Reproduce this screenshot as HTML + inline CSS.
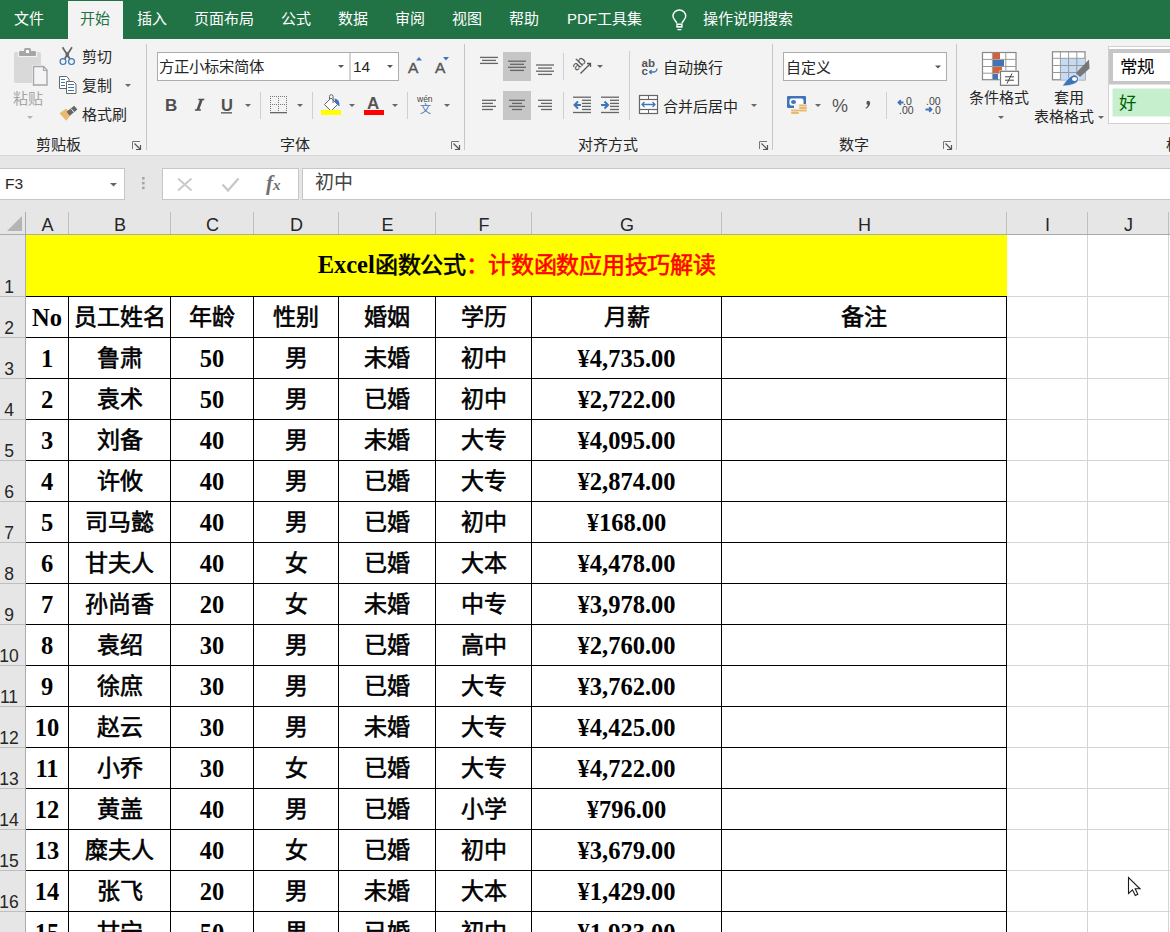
<!DOCTYPE html><html lang="zh-CN"><head><meta charset="utf-8"><title>Excel</title><style>
html,body{margin:0;padding:0}
body{width:1170px;height:932px;overflow:hidden;position:relative;background:#fff;font-family:"Liberation Sans",sans-serif}
div{box-sizing:border-box}
.ui{font-family:"Liberation Sans",sans-serif;font-size:15.5px;color:#262626;line-height:1}
.cell{position:absolute;display:flex;align-items:center;justify-content:center;font-family:"Liberation Serif",serif;font-weight:bold;font-size:23px;color:#000;white-space:nowrap;line-height:1}
.tab{position:absolute;top:-1px;height:39px;line-height:39px;color:#fff;font-size:15px;white-space:nowrap}
.arr{position:absolute;width:0;height:0;border-left:3px solid transparent;border-right:3px solid transparent;border-top:3px solid #666}
</style></head><body>

<div style="position:absolute;left:0px;top:0px;width:1170px;height:39px;background:#217346"></div>
<div style="position:absolute;left:68px;top:1px;width:55px;height:38px;background:#f3f3f3"></div>
<div class="tab" style="left:14px;color:#fff">文件</div>
<div class="tab" style="left:80px;color:#217346">开始</div>
<div class="tab" style="left:137px;color:#fff">插入</div>
<div class="tab" style="left:194px;color:#fff">页面布局</div>
<div class="tab" style="left:281px;color:#fff">公式</div>
<div class="tab" style="left:338px;color:#fff">数据</div>
<div class="tab" style="left:395px;color:#fff">审阅</div>
<div class="tab" style="left:452px;color:#fff">视图</div>
<div class="tab" style="left:509px;color:#fff">帮助</div>
<div class="tab" style="left:567px;color:#fff">PDF工具集</div>
<div class="tab" style="left:703px;color:#fff">操作说明搜索</div>
<svg width="700" height="39" style="position:absolute;left:0;top:0"><path d="M676.8 23.3C676.5 21 673 19.5 673 16.3A6.3 6.3 0 0 1 685.7 16.3C685.7 19.5 682.3 21 682 23.3" fill="none" stroke="#fff" stroke-width="1.4"/><rect x="676.3" y="23.5" width="6.3" height="4.2" fill="#fff"/><rect x="677.8" y="25" width="3.3" height="1" fill="#217346"/><rect x="677.3" y="29" width="4.3" height="1.2" rx="0.6" fill="#fff"/></svg>
<div style="position:absolute;left:0px;top:39px;width:1170px;height:117px;background:#f3f3f3"></div>
<div style="position:absolute;left:0px;top:155px;width:1170px;height:1px;background:#d6d6d6"></div>
<svg width="1170" height="160" style="position:absolute;left:0;top:0"><rect x="146" y="44" width="1" height="106" fill="#c6c6c6"/><rect x="464" y="44" width="1" height="106" fill="#c6c6c6"/><rect x="772" y="44" width="1" height="106" fill="#c6c6c6"/><rect x="956" y="44" width="1" height="106" fill="#c6c6c6"/><rect x="14" y="52" width="27" height="31" rx="1.5" fill="#d9d9d9"/><rect x="18" y="50" width="19" height="7" fill="#f3f3f3"/><rect x="19" y="51" width="17" height="5" rx="1" fill="#a6a6a6"/><rect x="24" y="48" width="7" height="5" rx="1.5" fill="#a6a6a6"/><rect x="26" y="50" width="3" height="3" fill="#fff"/><path d="M32 65h13l4 4v18h-17z" fill="#f3f3f3"/><path d="M33.5 66.5h10l3.5 3.5v15h-13.5z" fill="#f4f3f6" stroke="#a6a6a6" stroke-width="1.4"/><path d="M43.5 66.5v4h3.5" fill="none" stroke="#a6a6a6" stroke-width="1.2"/><path d="M27 116h6l-3 3z" fill="#b4b4b4"/><path d="M62.5 47.3L69.8 58.8M72 47.3L64.7 58.8" stroke="#666" stroke-width="1.7" fill="none"/><path d="M67.25 51.8L69.2 54.8L67.25 57.8L65.3 54.8z" fill="#666"/><circle cx="63" cy="61.6" r="2.9" fill="none" stroke="#3f75b8" stroke-width="1.2"/><circle cx="71.5" cy="61.6" r="2.9" fill="none" stroke="#3f75b8" stroke-width="1.2"/><path d="M59.5 76.5h7l2.5 2.5v9.5h-9.5z" fill="#fff" stroke="#666" stroke-width="1"/><path d="M66.5 81.5h7l2.5 2.5v9.5h-9.5z" fill="#fff" stroke="#666" stroke-width="1"/><rect x="61" y="79.0" width="4" height="1" fill="#3f75b8"/><rect x="61" y="82.0" width="4" height="1" fill="#3f75b8"/><rect x="61" y="85.0" width="4" height="1" fill="#3f75b8"/><rect x="68" y="84.0" width="6" height="1" fill="#3f75b8"/><rect x="68" y="87.0" width="6" height="1" fill="#3f75b8"/><rect x="68" y="90.0" width="6" height="1" fill="#3f75b8"/><path d="M125 84h6l-3 3z" fill="#666"/><path d="M59.5 113.2L66.3 108.6L71.2 114.6L66.2 120.8z" fill="#e8b96f"/><path d="M68.2 113.8L75.8 107.6" stroke="#666" stroke-width="5"/><path d="M71.2 108.8L74 112.3" stroke="#f3f3f3" stroke-width="1"/><path d="M132.5 149V141.5H140" fill="none" stroke="#777" stroke-width="1"/><path d="M134.5 143.5L140.5 149.5M140.5 145V149.5H136" fill="none" stroke="#555" stroke-width="1.2"/><rect x="157.5" y="52.5" width="241" height="28" fill="#fff" stroke="#acacac" stroke-width="1"/><rect x="349.5" y="52.5" width="1" height="28" fill="#acacac"/><path d="M338 65h6l-3 3z" fill="#555"/><path d="M387 65h6l-3 3z" fill="#555"/><path d="M416 60.5l3-3.5l3 3.5z" fill="#3f75b8"/><path d="M443 57h6l-3 3.5z" fill="#3f75b8"/><path d="M245 104h6l-3 3z" fill="#666"/><rect x="221" y="112.2" width="11" height="1.3" fill="#505050"/><path d="M198.5 98.8H204.5L204.2 100.3H202.6L199.4 109.2H201L200.7 110.7H194.7L195 109.2H196.6L199.8 100.3H198.2z" fill="#505050"/><rect x="260" y="92" width="1" height="27" fill="#cfcfcf"/><rect x="270" y="96" width="1" height="1" fill="#777"/><rect x="270" y="104" width="1" height="1" fill="#777"/><rect x="272" y="96" width="1" height="1" fill="#777"/><rect x="272" y="104" width="1" height="1" fill="#777"/><rect x="274" y="96" width="1" height="1" fill="#777"/><rect x="274" y="104" width="1" height="1" fill="#777"/><rect x="276" y="96" width="1" height="1" fill="#777"/><rect x="276" y="104" width="1" height="1" fill="#777"/><rect x="278" y="96" width="1" height="1" fill="#777"/><rect x="278" y="104" width="1" height="1" fill="#777"/><rect x="280" y="96" width="1" height="1" fill="#777"/><rect x="280" y="104" width="1" height="1" fill="#777"/><rect x="282" y="96" width="1" height="1" fill="#777"/><rect x="282" y="104" width="1" height="1" fill="#777"/><rect x="284" y="96" width="1" height="1" fill="#777"/><rect x="284" y="104" width="1" height="1" fill="#777"/><rect x="286" y="96" width="1" height="1" fill="#777"/><rect x="286" y="104" width="1" height="1" fill="#777"/><rect x="270" y="96" width="1" height="1" fill="#777"/><rect x="278" y="96" width="1" height="1" fill="#777"/><rect x="286" y="96" width="1" height="1" fill="#777"/><rect x="270" y="98" width="1" height="1" fill="#777"/><rect x="278" y="98" width="1" height="1" fill="#777"/><rect x="286" y="98" width="1" height="1" fill="#777"/><rect x="270" y="100" width="1" height="1" fill="#777"/><rect x="278" y="100" width="1" height="1" fill="#777"/><rect x="286" y="100" width="1" height="1" fill="#777"/><rect x="270" y="102" width="1" height="1" fill="#777"/><rect x="278" y="102" width="1" height="1" fill="#777"/><rect x="286" y="102" width="1" height="1" fill="#777"/><rect x="270" y="104" width="1" height="1" fill="#777"/><rect x="278" y="104" width="1" height="1" fill="#777"/><rect x="286" y="104" width="1" height="1" fill="#777"/><rect x="270" y="106" width="1" height="1" fill="#777"/><rect x="278" y="106" width="1" height="1" fill="#777"/><rect x="286" y="106" width="1" height="1" fill="#777"/><rect x="270" y="108" width="1" height="1" fill="#777"/><rect x="278" y="108" width="1" height="1" fill="#777"/><rect x="286" y="108" width="1" height="1" fill="#777"/><rect x="270" y="110" width="1" height="1" fill="#777"/><rect x="278" y="110" width="1" height="1" fill="#777"/><rect x="286" y="110" width="1" height="1" fill="#777"/><rect x="270" y="112" width="17" height="1.3" fill="#666"/><path d="M297 104h6l-3 3z" fill="#666"/><rect x="312" y="92" width="1" height="27" fill="#cfcfcf"/><path d="M324.5 104.5L331 98L337.5 104.5L331 111z" fill="#fff" stroke="#666" stroke-width="1"/><path d="M329.5 100V96.5a1.8 1.8 0 0 1 3.6 0V103" fill="none" stroke="#666" stroke-width="1"/><path d="M334.5 98.5q5.5 0.5 5 8l-2-1.5l-2.5-3z" fill="#3f75b8"/><rect x="321" y="110" width="20" height="5" fill="#ff0"/><path d="M349 104h6l-3 3z" fill="#666"/><rect x="364" y="110" width="20" height="5" fill="#f00"/><path d="M392 104h6l-3 3z" fill="#666"/><rect x="407" y="92" width="1" height="27" fill="#cfcfcf"/><path d="M444 104h6l-3 3z" fill="#666"/><path d="M451.5 149V141.5H459" fill="none" stroke="#777" stroke-width="1"/><path d="M453.5 143.5L459.5 149.5M459.5 145V149.5H455" fill="none" stroke="#555" stroke-width="1.2"/><rect x="480" y="56.75" width="18" height="1.3" fill="#666"/><rect x="482" y="59.75" width="14" height="1.3" fill="#666"/><rect x="480" y="62.75" width="18" height="1.3" fill="#666"/><rect x="503" y="52" width="28" height="29" fill="#c6c6c6"/><rect x="508" y="60.550000000000004" width="18" height="1.3" fill="#666"/><rect x="510" y="63.65" width="14" height="1.3" fill="#666"/><rect x="508" y="66.64999999999999" width="18" height="1.3" fill="#666"/><rect x="510" y="69.75" width="14" height="1.3" fill="#666"/><rect x="536" y="64.35" width="18" height="1.3" fill="#666"/><rect x="538" y="67.44999999999999" width="14" height="1.3" fill="#666"/><rect x="536" y="70.55" width="18" height="1.3" fill="#666"/><rect x="538" y="73.75" width="14" height="1.3" fill="#666"/><rect x="563" y="53" width="1" height="27" fill="#cfcfcf"/><text x="0" y="0" transform="translate(576.5 71.5) rotate(-45)" font-family="Liberation Sans" font-size="13" fill="#555">ab</text><path d="M580.5 73.5L590.3 63.7M587 63.5h3.5v3.5" fill="none" stroke="#555" stroke-width="1.3"/><path d="M597 65h6l-3 3z" fill="#666"/><rect x="629" y="51" width="1" height="69" fill="#cfcfcf"/><rect x="482" y="99.64999999999999" width="14" height="1.3" fill="#666"/><rect x="482" y="102.75" width="11" height="1.3" fill="#666"/><rect x="482" y="105.75" width="14" height="1.3" fill="#666"/><rect x="482" y="108.85" width="11" height="1.3" fill="#666"/><rect x="503" y="91" width="28" height="29" fill="#c6c6c6"/><rect x="509" y="99.64999999999999" width="16" height="1.3" fill="#666"/><rect x="512" y="102.75" width="10" height="1.3" fill="#666"/><rect x="509" y="105.75" width="16" height="1.3" fill="#666"/><rect x="512" y="108.85" width="10" height="1.3" fill="#666"/><rect x="538" y="99.64999999999999" width="14" height="1.3" fill="#666"/><rect x="541" y="102.75" width="11" height="1.3" fill="#666"/><rect x="538" y="105.75" width="14" height="1.3" fill="#666"/><rect x="541" y="108.85" width="11" height="1.3" fill="#666"/><rect x="563" y="92" width="1" height="27" fill="#cfcfcf"/><rect x="573" y="96.55" width="18" height="1.3" fill="#666"/><rect x="573" y="111.85" width="18" height="1.3" fill="#666"/><rect x="582" y="99.64999999999999" width="9" height="1.3" fill="#666"/><rect x="582" y="102.75" width="9" height="1.3" fill="#666"/><rect x="582" y="105.75" width="9" height="1.3" fill="#666"/><rect x="582" y="108.85" width="9" height="1.3" fill="#666"/><path d="M581 105H575M578 101.5L574.5 105L578 108.5" fill="none" stroke="#3f75b8" stroke-width="2"/><rect x="601" y="96.55" width="18" height="1.3" fill="#666"/><rect x="601" y="111.85" width="18" height="1.3" fill="#666"/><rect x="610" y="99.64999999999999" width="9" height="1.3" fill="#666"/><rect x="610" y="102.75" width="9" height="1.3" fill="#666"/><rect x="610" y="105.75" width="9" height="1.3" fill="#666"/><rect x="610" y="108.85" width="9" height="1.3" fill="#666"/><path d="M601 105H607.5M604.5 101.5L608 105L604.5 108.5" fill="none" stroke="#3f75b8" stroke-width="2"/><text x="641.5" y="66.5" font-family="Liberation Sans" font-size="11.5" font-weight="bold" fill="#555">ab</text><text x="641.5" y="74.5" font-family="Liberation Sans" font-size="11.5" font-weight="bold" fill="#555">c</text><path d="M657 68.5q0 3.5-4 3.5h-3.5M651.5 70l-2 2l2 2" fill="none" stroke="#3f75b8" stroke-width="1.3"/><rect x="639.5" y="95.5" width="18" height="18" fill="#fff" stroke="#666" stroke-width="1.2"/><rect x="639.5" y="98.9" width="18.0" height="1.2" fill="#666"/><rect x="639.5" y="108.9" width="18.0" height="1.2" fill="#666"/><rect x="648" y="95.5" width="1" height="4" fill="#666"/><rect x="648" y="109.5" width="1" height="4" fill="#666"/><path d="M642 104.5h13M644.5 102l-2.5 2.5l2.5 2.5M652.5 102l2.5 2.5l-2.5 2.5" fill="none" stroke="#3f75b8" stroke-width="1.3"/><path d="M751 104h6l-3 3z" fill="#666"/><path d="M759.5 149V141.5H767" fill="none" stroke="#777" stroke-width="1"/><path d="M761.5 143.5L767.5 149.5M767.5 145V149.5H763" fill="none" stroke="#555" stroke-width="1.2"/><rect x="783.5" y="52.5" width="163" height="28" fill="#fff" stroke="#acacac" stroke-width="1"/><path d="M935 65.5h6l-3 3z" fill="#555"/><rect x="787" y="96" width="19" height="12" rx="1" fill="#3f75b8"/><rect x="789.5" y="98.5" width="14" height="7" rx="2" fill="#fff"/><ellipse cx="793.5" cy="102" rx="2.5" ry="2" fill="#3f75b8"/><rect x="794" y="104" width="13" height="8" fill="#f3f3f3"/><rect x="799" y="104.5" width="8" height="2" rx="1" fill="#e8b96f"/><rect x="799" y="107" width="8" height="2" rx="1" fill="#e8b96f"/><rect x="799" y="109.5" width="8" height="2" rx="1" fill="#e8b96f"/><rect x="791" y="109.5" width="8" height="2" rx="1" fill="#e8b96f"/><rect x="791" y="112" width="8" height="2" rx="1" fill="#e8b96f"/><path d="M815 104h6l-3 3z" fill="#666"/><rect x="886" y="92" width="1" height="27" fill="#cfcfcf"/><path d="M903.5 102.5H898.5M900.8 100.2L898.5 102.5L900.8 104.8" fill="none" stroke="#3f75b8" stroke-width="1.8"/><path d="M925.5 109.5H931.5M929.2 107.2L931.5 109.5L929.2 111.8" fill="none" stroke="#3f75b8" stroke-width="1.8"/><path d="M943.5 149V141.5H951" fill="none" stroke="#777" stroke-width="1"/><path d="M945.5 143.5L951.5 149.5M951.5 145V149.5H947" fill="none" stroke="#555" stroke-width="1.2"/><rect x="982.5" y="52.5" width="33.5" height="27.2" fill="#fff" stroke="#888" stroke-width="1.2"/><rect x="982.5" y="58.9" width="33.5" height="1" fill="#999"/><rect x="982.5" y="66.0" width="33.5" height="1" fill="#999"/><rect x="982.5" y="72.7" width="33.5" height="1" fill="#999"/><rect x="991.9" y="52.5" width="1" height="27.2" fill="#999"/><rect x="1005.3" y="52.5" width="1" height="27.2" fill="#999"/><rect x="993" y="53" width="7" height="6" fill="#d4613b"/><rect x="993" y="60" width="11" height="6" fill="#3f75b8"/><rect x="993" y="67" width="9" height="6" fill="#d4613b"/><rect x="993" y="74" width="5" height="5.5" fill="#3f75b8"/><rect x="999.5" y="70.3" width="20" height="16" fill="#f3f3f3"/><rect x="1000.5" y="71.3" width="18" height="14" fill="#fff" stroke="#777" stroke-width="1.2"/><path d="M1005 76.8h9M1005 80.2h9M1007 83.5L1012 73.5" fill="none" stroke="#444" stroke-width="1"/><path d="M998 116h6l-3 3z" fill="#666"/><rect x="1052.5" y="51.8" width="32.5" height="28" fill="#fff" stroke="#888" stroke-width="1.2"/><rect x="1061" y="58.8" width="24" height="21" fill="#c5daf3"/><rect x="1052.5" y="57.8" width="32.5" height="1" fill="#999"/><rect x="1052.5" y="65.0" width="32.5" height="1" fill="#999"/><rect x="1052.5" y="72.0" width="32.5" height="1" fill="#999"/><rect x="1059.9" y="51.8" width="1" height="28" fill="#999"/><rect x="1068.1" y="51.8" width="1" height="28" fill="#999"/><rect x="1076.3" y="51.8" width="1" height="28" fill="#999"/><path d="M1089 59.5L1089.5 68.5L1080 77L1076 73z" fill="#777"/><path d="M1075 74.5L1079 78.5" stroke="#f3f3f3" stroke-width="1.5"/><path d="M1073 75C1076 74 1079 77 1078.5 80C1077 84 1070 86 1062 86C1065 83 1067 78 1073 75z" fill="#3f75b8" stroke="#f3f3f3" stroke-width="0.8"/><ellipse cx="1074.5" cy="79" rx="2.5" ry="2" fill="#fff"/><path d="M1098 116h6l-3 3z" fill="#666"/><rect x="1108.5" y="46.5" width="70" height="77" fill="#fff" stroke="#d0d0d0" stroke-width="1"/><rect x="1109" y="49" width="70" height="35.5" fill="#c6c6c6"/><rect x="1113" y="53" width="70" height="28" fill="#fff"/><rect x="1112.5" y="88.5" width="70" height="28" fill="#c6efce"/><path d="M867.8 100.8a2.3 2.3 0 0 1 2.3 2.5c0 2.2-1.6 4.3-4.2 5.4l-0.5-0.8c1.5-0.9 2.3-1.9 2.4-2.9a2.3 2.3 0 0 1 0-4.2z" fill="#555"/></svg>
<div style="position:absolute;left:13px;top:91px;white-space:nowrap;font-size:15px;line-height:15px;color:#a6a6a6;">粘贴</div>
<div style="position:absolute;left:82px;top:49px;white-space:nowrap;font-size:15px;line-height:15px;color:#262626;">剪切</div>
<div style="position:absolute;left:82px;top:78px;white-space:nowrap;font-size:15px;line-height:15px;color:#262626;">复制</div>
<div style="position:absolute;left:82px;top:107px;white-space:nowrap;font-size:15px;line-height:15px;color:#262626;">格式刷</div>
<div style="position:absolute;left:36px;top:137px;white-space:nowrap;font-size:15px;line-height:15px;color:#262626;">剪贴板</div>
<div style="position:absolute;left:159px;top:59px;white-space:nowrap;font-size:15.3px;line-height:15.3px;color:#262626;">方正小标宋简体</div>
<div style="position:absolute;left:353px;top:59px;white-space:nowrap;font-size:15.5px;line-height:15.5px;color:#262626;">14</div>
<div style="position:absolute;left:165px;top:97px;white-space:nowrap;font-size:17px;line-height:17px;color:#505050;font-weight:bold">B</div>
<div style="position:absolute;left:221px;top:97px;white-space:nowrap;font-size:16.5px;line-height:16.5px;color:#505050;font-weight:bold">U</div>
<div style="position:absolute;left:417px;top:95px;white-space:nowrap;font-size:8.5px;line-height:8.5px;color:#444;">wén</div>
<div style="position:absolute;left:408px;top:59.5px;white-space:nowrap;font-size:15.5px;line-height:15.5px;color:#555;-webkit-text-stroke:0.4px #555">A</div>
<div style="position:absolute;left:435px;top:59.5px;white-space:nowrap;font-size:15.5px;line-height:15.5px;color:#555;-webkit-text-stroke:0.4px #555">A</div>
<div style="position:absolute;left:367px;top:95px;white-space:nowrap;font-size:17px;line-height:17px;color:#555;font-weight:bold">A</div>
<div style="position:absolute;left:420px;top:104px;white-space:nowrap;font-size:11px;line-height:11px;color:#3f75b8;">文</div>
<div style="position:absolute;left:280px;top:137px;white-space:nowrap;font-size:15px;line-height:15px;color:#262626;">字体</div>
<div style="position:absolute;left:663px;top:60px;white-space:nowrap;font-size:15px;line-height:15px;color:#262626;">自动换行</div>
<div style="position:absolute;left:663px;top:99px;white-space:nowrap;font-size:15px;line-height:15px;color:#262626;">合并后居中</div>
<div style="position:absolute;left:577.5px;top:137px;white-space:nowrap;font-size:15px;line-height:15px;color:#262626;">对齐方式</div>
<div style="position:absolute;left:786px;top:60px;white-space:nowrap;font-size:15px;line-height:15px;color:#262626;">自定义</div>
<div style="position:absolute;left:832px;top:97px;white-space:nowrap;font-size:18px;line-height:18px;color:#555;">%</div>
<div style="position:absolute;left:903px;top:96px;white-space:nowrap;font-size:10.5px;line-height:10.5px;color:#444;">.0</div>
<div style="position:absolute;left:899px;top:105px;white-space:nowrap;font-size:10.5px;line-height:10.5px;color:#444;">.00</div>
<div style="position:absolute;left:926px;top:96px;white-space:nowrap;font-size:10.5px;line-height:10.5px;color:#444;">.00</div>
<div style="position:absolute;left:932px;top:105px;white-space:nowrap;font-size:10.5px;line-height:10.5px;color:#444;">.0</div>
<div style="position:absolute;left:838.5px;top:137px;white-space:nowrap;font-size:15px;line-height:15px;color:#262626;">数字</div>
<div style="position:absolute;left:968.5px;top:90px;white-space:nowrap;font-size:15px;line-height:15px;color:#262626;">条件格式</div>
<div style="position:absolute;left:1054px;top:90px;white-space:nowrap;font-size:15px;line-height:15px;color:#262626;">套用</div>
<div style="position:absolute;left:1033.5px;top:109px;white-space:nowrap;font-size:15px;line-height:15px;color:#262626;">表格格式</div>
<div style="position:absolute;left:1120px;top:59px;white-space:nowrap;font-size:17.5px;line-height:17.5px;color:#000;">常规</div>
<div style="position:absolute;left:1118.5px;top:95px;white-space:nowrap;font-size:17.5px;line-height:17.5px;color:#006100;">好</div>
<div style="position:absolute;left:1166px;top:137px;white-space:nowrap;font-size:15px;line-height:15px;color:#262626;">格</div>
<div style="position:absolute;left:0px;top:156px;width:1170px;height:44px;background:#e6e6e6"></div>
<div style="position:absolute;left:-1px;top:168px;width:126px;height:32px;background:#fff;border:1px solid #c6c6c6"></div>
<div style="position:absolute;left:5px;top:176px;white-space:nowrap;font-size:15.5px;line-height:16px;color:#262626">F3</div>
<div style="position:absolute;left:162px;top:168px;width:137px;height:32px;background:#fff;border:1px solid #c6c6c6"></div>
<div style="position:absolute;left:302px;top:168px;width:900px;height:32px;background:#fff;border:1px solid #c6c6c6"></div>
<div style="position:absolute;left:315px;top:173px;white-space:nowrap;font-size:19px;line-height:19px;color:#444">初中</div>
<svg width="1170" height="240" style="position:absolute;left:0;top:0"><path d="M110 183h7l-3.5 3.5z" fill="#666"/><rect x="142" y="177" width="2.6" height="2.6" fill="#a6a6a6"/><rect x="142" y="181.8" width="2.6" height="2.6" fill="#a6a6a6"/><rect x="142" y="186.6" width="2.6" height="2.6" fill="#a6a6a6"/><path d="M178 178.5L191.5 190.5M191.5 178.5L178 190.5" stroke="#c8c8c8" stroke-width="1.8" fill="none"/><path d="M222.5 184.5L228 190.5L238.5 178.5" stroke="#c8c8c8" stroke-width="2.4" fill="none"/></svg>
<div style="position:absolute;left:266px;top:173px;white-space:nowrap;font-family:'Liberation Serif',serif;font-style:italic;font-weight:bold;font-size:21px;line-height:21px;color:#707070">f</div>
<div style="position:absolute;left:273px;top:178px;white-space:nowrap;font-family:'Liberation Serif',serif;font-style:italic;font-weight:bold;font-size:15px;line-height:15px;color:#707070">x</div>
<div style="position:absolute;left:0px;top:200px;width:1170px;height:35px;background:#e6e6e6"></div>
<div style="position:absolute;left:0px;top:234px;width:1170px;height:1px;background:#ababab"></div>
<div style="position:absolute;left:0px;top:235px;width:25px;height:700px;background:#e6e6e6"></div>
<div style="position:absolute;left:25px;top:212px;width:1px;height:720px;background:#ababab"></div>
<svg width="30" height="240" style="position:absolute;left:0;top:0"><path d="M7 231L22 216V231z" fill="#b4b4b4"/></svg>
<div class="ui" style="position:absolute;left:25px;top:214px;width:43px;height:22px;text-align:center;font-size:18px;padding-left:2px;color:#262626;line-height:22px">A</div>
<div style="position:absolute;left:68px;top:212px;width:1px;height:22px;background:#bfbfbf"></div>
<div class="ui" style="position:absolute;left:68px;top:214px;width:102px;height:22px;text-align:center;font-size:18px;padding-left:2px;color:#262626;line-height:22px">B</div>
<div style="position:absolute;left:170px;top:212px;width:1px;height:22px;background:#bfbfbf"></div>
<div class="ui" style="position:absolute;left:170px;top:214px;width:83px;height:22px;text-align:center;font-size:18px;padding-left:2px;color:#262626;line-height:22px">C</div>
<div style="position:absolute;left:253px;top:212px;width:1px;height:22px;background:#bfbfbf"></div>
<div class="ui" style="position:absolute;left:253px;top:214px;width:85px;height:22px;text-align:center;font-size:18px;padding-left:2px;color:#262626;line-height:22px">D</div>
<div style="position:absolute;left:338px;top:212px;width:1px;height:22px;background:#bfbfbf"></div>
<div class="ui" style="position:absolute;left:338px;top:214px;width:97px;height:22px;text-align:center;font-size:18px;padding-left:2px;color:#262626;line-height:22px">E</div>
<div style="position:absolute;left:435px;top:212px;width:1px;height:22px;background:#bfbfbf"></div>
<div class="ui" style="position:absolute;left:435px;top:214px;width:96px;height:22px;text-align:center;font-size:18px;padding-left:2px;color:#262626;line-height:22px">F</div>
<div style="position:absolute;left:531px;top:212px;width:1px;height:22px;background:#bfbfbf"></div>
<div class="ui" style="position:absolute;left:531px;top:214px;width:190px;height:22px;text-align:center;font-size:18px;padding-left:2px;color:#262626;line-height:22px">G</div>
<div style="position:absolute;left:721px;top:212px;width:1px;height:22px;background:#bfbfbf"></div>
<div class="ui" style="position:absolute;left:721px;top:214px;width:285px;height:22px;text-align:center;font-size:18px;padding-left:2px;color:#262626;line-height:22px">H</div>
<div style="position:absolute;left:1006px;top:212px;width:1px;height:22px;background:#bfbfbf"></div>
<div class="ui" style="position:absolute;left:1006px;top:214px;width:81px;height:22px;text-align:center;font-size:18px;padding-left:2px;color:#262626;line-height:22px">I</div>
<div style="position:absolute;left:1087px;top:212px;width:1px;height:22px;background:#bfbfbf"></div>
<div class="ui" style="position:absolute;left:1087px;top:214px;width:81px;height:22px;text-align:center;font-size:18px;padding-left:2px;color:#262626;line-height:22px">J</div>
<div style="position:absolute;left:1168px;top:212px;width:1px;height:22px;background:#bfbfbf"></div>
<div style="position:absolute;left:0px;top:296px;width:25px;height:1px;background:#bfbfbf"></div>
<div style="position:absolute;left:-11px;top:279px;width:40px;text-align:center;font-size:17.5px;line-height:17px;color:#262626">1</div>
<div style="position:absolute;left:0px;top:337px;width:25px;height:1px;background:#bfbfbf"></div>
<div style="position:absolute;left:-11px;top:320px;width:40px;text-align:center;font-size:17.5px;line-height:17px;color:#262626">2</div>
<div style="position:absolute;left:0px;top:378px;width:25px;height:1px;background:#bfbfbf"></div>
<div style="position:absolute;left:-11px;top:361px;width:40px;text-align:center;font-size:17.5px;line-height:17px;color:#262626">3</div>
<div style="position:absolute;left:0px;top:419px;width:25px;height:1px;background:#bfbfbf"></div>
<div style="position:absolute;left:-11px;top:402px;width:40px;text-align:center;font-size:17.5px;line-height:17px;color:#262626">4</div>
<div style="position:absolute;left:0px;top:460px;width:25px;height:1px;background:#bfbfbf"></div>
<div style="position:absolute;left:-11px;top:443px;width:40px;text-align:center;font-size:17.5px;line-height:17px;color:#262626">5</div>
<div style="position:absolute;left:0px;top:501px;width:25px;height:1px;background:#bfbfbf"></div>
<div style="position:absolute;left:-11px;top:484px;width:40px;text-align:center;font-size:17.5px;line-height:17px;color:#262626">6</div>
<div style="position:absolute;left:0px;top:542px;width:25px;height:1px;background:#bfbfbf"></div>
<div style="position:absolute;left:-11px;top:525px;width:40px;text-align:center;font-size:17.5px;line-height:17px;color:#262626">7</div>
<div style="position:absolute;left:0px;top:583px;width:25px;height:1px;background:#bfbfbf"></div>
<div style="position:absolute;left:-11px;top:566px;width:40px;text-align:center;font-size:17.5px;line-height:17px;color:#262626">8</div>
<div style="position:absolute;left:0px;top:624px;width:25px;height:1px;background:#bfbfbf"></div>
<div style="position:absolute;left:-11px;top:607px;width:40px;text-align:center;font-size:17.5px;line-height:17px;color:#262626">9</div>
<div style="position:absolute;left:0px;top:665px;width:25px;height:1px;background:#bfbfbf"></div>
<div style="position:absolute;left:-11px;top:648px;width:40px;text-align:center;font-size:17.5px;line-height:17px;color:#262626">10</div>
<div style="position:absolute;left:0px;top:706px;width:25px;height:1px;background:#bfbfbf"></div>
<div style="position:absolute;left:-11px;top:689px;width:40px;text-align:center;font-size:17.5px;line-height:17px;color:#262626">11</div>
<div style="position:absolute;left:0px;top:747px;width:25px;height:1px;background:#bfbfbf"></div>
<div style="position:absolute;left:-11px;top:730px;width:40px;text-align:center;font-size:17.5px;line-height:17px;color:#262626">12</div>
<div style="position:absolute;left:0px;top:788px;width:25px;height:1px;background:#bfbfbf"></div>
<div style="position:absolute;left:-11px;top:771px;width:40px;text-align:center;font-size:17.5px;line-height:17px;color:#262626">13</div>
<div style="position:absolute;left:0px;top:829px;width:25px;height:1px;background:#bfbfbf"></div>
<div style="position:absolute;left:-11px;top:812px;width:40px;text-align:center;font-size:17.5px;line-height:17px;color:#262626">14</div>
<div style="position:absolute;left:0px;top:870px;width:25px;height:1px;background:#bfbfbf"></div>
<div style="position:absolute;left:-11px;top:853px;width:40px;text-align:center;font-size:17.5px;line-height:17px;color:#262626">15</div>
<div style="position:absolute;left:0px;top:911px;width:25px;height:1px;background:#bfbfbf"></div>
<div style="position:absolute;left:-11px;top:894px;width:40px;text-align:center;font-size:17.5px;line-height:17px;color:#262626">16</div>
<div style="position:absolute;left:0px;top:952px;width:25px;height:1px;background:#bfbfbf"></div>
<div style="position:absolute;left:-11px;top:935px;width:40px;text-align:center;font-size:17.5px;line-height:17px;color:#262626">17</div>
<div style="position:absolute;left:68px;top:235px;width:1px;height:700px;background:#d4d4d4"></div>
<div style="position:absolute;left:170px;top:235px;width:1px;height:700px;background:#d4d4d4"></div>
<div style="position:absolute;left:253px;top:235px;width:1px;height:700px;background:#d4d4d4"></div>
<div style="position:absolute;left:338px;top:235px;width:1px;height:700px;background:#d4d4d4"></div>
<div style="position:absolute;left:435px;top:235px;width:1px;height:700px;background:#d4d4d4"></div>
<div style="position:absolute;left:531px;top:235px;width:1px;height:700px;background:#d4d4d4"></div>
<div style="position:absolute;left:721px;top:235px;width:1px;height:700px;background:#d4d4d4"></div>
<div style="position:absolute;left:1006px;top:235px;width:1px;height:700px;background:#d4d4d4"></div>
<div style="position:absolute;left:1087px;top:235px;width:1px;height:700px;background:#d4d4d4"></div>
<div style="position:absolute;left:1168px;top:235px;width:1px;height:700px;background:#d4d4d4"></div>
<div style="position:absolute;left:26px;top:296px;width:1150px;height:1px;background:#d4d4d4"></div>
<div style="position:absolute;left:26px;top:337px;width:1150px;height:1px;background:#d4d4d4"></div>
<div style="position:absolute;left:26px;top:378px;width:1150px;height:1px;background:#d4d4d4"></div>
<div style="position:absolute;left:26px;top:419px;width:1150px;height:1px;background:#d4d4d4"></div>
<div style="position:absolute;left:26px;top:460px;width:1150px;height:1px;background:#d4d4d4"></div>
<div style="position:absolute;left:26px;top:501px;width:1150px;height:1px;background:#d4d4d4"></div>
<div style="position:absolute;left:26px;top:542px;width:1150px;height:1px;background:#d4d4d4"></div>
<div style="position:absolute;left:26px;top:583px;width:1150px;height:1px;background:#d4d4d4"></div>
<div style="position:absolute;left:26px;top:624px;width:1150px;height:1px;background:#d4d4d4"></div>
<div style="position:absolute;left:26px;top:665px;width:1150px;height:1px;background:#d4d4d4"></div>
<div style="position:absolute;left:26px;top:706px;width:1150px;height:1px;background:#d4d4d4"></div>
<div style="position:absolute;left:26px;top:747px;width:1150px;height:1px;background:#d4d4d4"></div>
<div style="position:absolute;left:26px;top:788px;width:1150px;height:1px;background:#d4d4d4"></div>
<div style="position:absolute;left:26px;top:829px;width:1150px;height:1px;background:#d4d4d4"></div>
<div style="position:absolute;left:26px;top:870px;width:1150px;height:1px;background:#d4d4d4"></div>
<div style="position:absolute;left:26px;top:911px;width:1150px;height:1px;background:#d4d4d4"></div>
<div style="position:absolute;left:26px;top:952px;width:1150px;height:1px;background:#d4d4d4"></div>
<div style="position:absolute;left:26px;top:235px;width:981px;height:61px;background:#ff0"></div>
<div class="cell" style="left:26px;top:235px;width:981px;height:61px"><span><span style="font-size:24.5px">Excel</span><span style="font-weight:normal;letter-spacing:-0.3px;-webkit-text-stroke:0.6px #000">函数公式</span><span style="color:#f00;font-weight:normal;letter-spacing:-0.3px;-webkit-text-stroke:0.6px #f00">：计数函数应用技巧解读</span></span></div>
<div style="position:absolute;left:26px;top:297px;width:42px;height:40px;background:#fff"></div>
<div class="cell" style="left:26px;top:297px;width:42px;height:40px;font-size:24.5px;padding-top:2px;">No</div>
<div style="position:absolute;left:69px;top:297px;width:101px;height:40px;background:#fff"></div>
<div class="cell" style="left:69px;top:297px;width:101px;height:40px;font-weight:normal;-webkit-text-stroke:0.6px #000;">员工姓名</div>
<div style="position:absolute;left:171px;top:297px;width:82px;height:40px;background:#fff"></div>
<div class="cell" style="left:171px;top:297px;width:82px;height:40px;font-weight:normal;-webkit-text-stroke:0.6px #000;">年龄</div>
<div style="position:absolute;left:254px;top:297px;width:84px;height:40px;background:#fff"></div>
<div class="cell" style="left:254px;top:297px;width:84px;height:40px;font-weight:normal;-webkit-text-stroke:0.6px #000;">性别</div>
<div style="position:absolute;left:339px;top:297px;width:96px;height:40px;background:#fff"></div>
<div class="cell" style="left:339px;top:297px;width:96px;height:40px;font-weight:normal;-webkit-text-stroke:0.6px #000;">婚姻</div>
<div style="position:absolute;left:436px;top:297px;width:95px;height:40px;background:#fff"></div>
<div class="cell" style="left:436px;top:297px;width:95px;height:40px;font-weight:normal;-webkit-text-stroke:0.6px #000;">学历</div>
<div style="position:absolute;left:532px;top:297px;width:189px;height:40px;background:#fff"></div>
<div class="cell" style="left:532px;top:297px;width:189px;height:40px;font-weight:normal;-webkit-text-stroke:0.6px #000;">月薪</div>
<div style="position:absolute;left:722px;top:297px;width:284px;height:40px;background:#fff"></div>
<div class="cell" style="left:722px;top:297px;width:284px;height:40px;font-weight:normal;-webkit-text-stroke:0.6px #000;">备注</div>
<div style="position:absolute;left:26px;top:338px;width:42px;height:40px;background:#fff"></div>
<div class="cell" style="left:26px;top:338px;width:42px;height:40px;font-size:24.5px;padding-top:2px;">1</div>
<div style="position:absolute;left:69px;top:338px;width:101px;height:40px;background:#fff"></div>
<div class="cell" style="left:69px;top:338px;width:101px;height:40px;font-weight:normal;-webkit-text-stroke:0.6px #000;">鲁肃</div>
<div style="position:absolute;left:171px;top:338px;width:82px;height:40px;background:#fff"></div>
<div class="cell" style="left:171px;top:338px;width:82px;height:40px;font-size:24.5px;padding-top:2px;">50</div>
<div style="position:absolute;left:254px;top:338px;width:84px;height:40px;background:#fff"></div>
<div class="cell" style="left:254px;top:338px;width:84px;height:40px;font-weight:normal;-webkit-text-stroke:0.6px #000;">男</div>
<div style="position:absolute;left:339px;top:338px;width:96px;height:40px;background:#fff"></div>
<div class="cell" style="left:339px;top:338px;width:96px;height:40px;font-weight:normal;-webkit-text-stroke:0.6px #000;">未婚</div>
<div style="position:absolute;left:436px;top:338px;width:95px;height:40px;background:#fff"></div>
<div class="cell" style="left:436px;top:338px;width:95px;height:40px;font-weight:normal;-webkit-text-stroke:0.6px #000;">初中</div>
<div style="position:absolute;left:532px;top:338px;width:189px;height:40px;background:#fff"></div>
<div class="cell" style="left:532px;top:338px;width:189px;height:40px;font-size:24.5px;padding-top:2px;">¥4,735.00</div>
<div style="position:absolute;left:722px;top:338px;width:284px;height:40px;background:#fff"></div>
<div style="position:absolute;left:26px;top:379px;width:42px;height:40px;background:#fff"></div>
<div class="cell" style="left:26px;top:379px;width:42px;height:40px;font-size:24.5px;padding-top:2px;">2</div>
<div style="position:absolute;left:69px;top:379px;width:101px;height:40px;background:#fff"></div>
<div class="cell" style="left:69px;top:379px;width:101px;height:40px;font-weight:normal;-webkit-text-stroke:0.6px #000;">袁术</div>
<div style="position:absolute;left:171px;top:379px;width:82px;height:40px;background:#fff"></div>
<div class="cell" style="left:171px;top:379px;width:82px;height:40px;font-size:24.5px;padding-top:2px;">50</div>
<div style="position:absolute;left:254px;top:379px;width:84px;height:40px;background:#fff"></div>
<div class="cell" style="left:254px;top:379px;width:84px;height:40px;font-weight:normal;-webkit-text-stroke:0.6px #000;">男</div>
<div style="position:absolute;left:339px;top:379px;width:96px;height:40px;background:#fff"></div>
<div class="cell" style="left:339px;top:379px;width:96px;height:40px;font-weight:normal;-webkit-text-stroke:0.6px #000;">已婚</div>
<div style="position:absolute;left:436px;top:379px;width:95px;height:40px;background:#fff"></div>
<div class="cell" style="left:436px;top:379px;width:95px;height:40px;font-weight:normal;-webkit-text-stroke:0.6px #000;">初中</div>
<div style="position:absolute;left:532px;top:379px;width:189px;height:40px;background:#fff"></div>
<div class="cell" style="left:532px;top:379px;width:189px;height:40px;font-size:24.5px;padding-top:2px;">¥2,722.00</div>
<div style="position:absolute;left:722px;top:379px;width:284px;height:40px;background:#fff"></div>
<div style="position:absolute;left:26px;top:420px;width:42px;height:40px;background:#fff"></div>
<div class="cell" style="left:26px;top:420px;width:42px;height:40px;font-size:24.5px;padding-top:2px;">3</div>
<div style="position:absolute;left:69px;top:420px;width:101px;height:40px;background:#fff"></div>
<div class="cell" style="left:69px;top:420px;width:101px;height:40px;font-weight:normal;-webkit-text-stroke:0.6px #000;">刘备</div>
<div style="position:absolute;left:171px;top:420px;width:82px;height:40px;background:#fff"></div>
<div class="cell" style="left:171px;top:420px;width:82px;height:40px;font-size:24.5px;padding-top:2px;">40</div>
<div style="position:absolute;left:254px;top:420px;width:84px;height:40px;background:#fff"></div>
<div class="cell" style="left:254px;top:420px;width:84px;height:40px;font-weight:normal;-webkit-text-stroke:0.6px #000;">男</div>
<div style="position:absolute;left:339px;top:420px;width:96px;height:40px;background:#fff"></div>
<div class="cell" style="left:339px;top:420px;width:96px;height:40px;font-weight:normal;-webkit-text-stroke:0.6px #000;">未婚</div>
<div style="position:absolute;left:436px;top:420px;width:95px;height:40px;background:#fff"></div>
<div class="cell" style="left:436px;top:420px;width:95px;height:40px;font-weight:normal;-webkit-text-stroke:0.6px #000;">大专</div>
<div style="position:absolute;left:532px;top:420px;width:189px;height:40px;background:#fff"></div>
<div class="cell" style="left:532px;top:420px;width:189px;height:40px;font-size:24.5px;padding-top:2px;">¥4,095.00</div>
<div style="position:absolute;left:722px;top:420px;width:284px;height:40px;background:#fff"></div>
<div style="position:absolute;left:26px;top:461px;width:42px;height:40px;background:#fff"></div>
<div class="cell" style="left:26px;top:461px;width:42px;height:40px;font-size:24.5px;padding-top:2px;">4</div>
<div style="position:absolute;left:69px;top:461px;width:101px;height:40px;background:#fff"></div>
<div class="cell" style="left:69px;top:461px;width:101px;height:40px;font-weight:normal;-webkit-text-stroke:0.6px #000;">许攸</div>
<div style="position:absolute;left:171px;top:461px;width:82px;height:40px;background:#fff"></div>
<div class="cell" style="left:171px;top:461px;width:82px;height:40px;font-size:24.5px;padding-top:2px;">40</div>
<div style="position:absolute;left:254px;top:461px;width:84px;height:40px;background:#fff"></div>
<div class="cell" style="left:254px;top:461px;width:84px;height:40px;font-weight:normal;-webkit-text-stroke:0.6px #000;">男</div>
<div style="position:absolute;left:339px;top:461px;width:96px;height:40px;background:#fff"></div>
<div class="cell" style="left:339px;top:461px;width:96px;height:40px;font-weight:normal;-webkit-text-stroke:0.6px #000;">已婚</div>
<div style="position:absolute;left:436px;top:461px;width:95px;height:40px;background:#fff"></div>
<div class="cell" style="left:436px;top:461px;width:95px;height:40px;font-weight:normal;-webkit-text-stroke:0.6px #000;">大专</div>
<div style="position:absolute;left:532px;top:461px;width:189px;height:40px;background:#fff"></div>
<div class="cell" style="left:532px;top:461px;width:189px;height:40px;font-size:24.5px;padding-top:2px;">¥2,874.00</div>
<div style="position:absolute;left:722px;top:461px;width:284px;height:40px;background:#fff"></div>
<div style="position:absolute;left:26px;top:502px;width:42px;height:40px;background:#fff"></div>
<div class="cell" style="left:26px;top:502px;width:42px;height:40px;font-size:24.5px;padding-top:2px;">5</div>
<div style="position:absolute;left:69px;top:502px;width:101px;height:40px;background:#fff"></div>
<div class="cell" style="left:69px;top:502px;width:101px;height:40px;font-weight:normal;-webkit-text-stroke:0.6px #000;">司马懿</div>
<div style="position:absolute;left:171px;top:502px;width:82px;height:40px;background:#fff"></div>
<div class="cell" style="left:171px;top:502px;width:82px;height:40px;font-size:24.5px;padding-top:2px;">40</div>
<div style="position:absolute;left:254px;top:502px;width:84px;height:40px;background:#fff"></div>
<div class="cell" style="left:254px;top:502px;width:84px;height:40px;font-weight:normal;-webkit-text-stroke:0.6px #000;">男</div>
<div style="position:absolute;left:339px;top:502px;width:96px;height:40px;background:#fff"></div>
<div class="cell" style="left:339px;top:502px;width:96px;height:40px;font-weight:normal;-webkit-text-stroke:0.6px #000;">已婚</div>
<div style="position:absolute;left:436px;top:502px;width:95px;height:40px;background:#fff"></div>
<div class="cell" style="left:436px;top:502px;width:95px;height:40px;font-weight:normal;-webkit-text-stroke:0.6px #000;">初中</div>
<div style="position:absolute;left:532px;top:502px;width:189px;height:40px;background:#fff"></div>
<div class="cell" style="left:532px;top:502px;width:189px;height:40px;font-size:24.5px;padding-top:2px;">¥168.00</div>
<div style="position:absolute;left:722px;top:502px;width:284px;height:40px;background:#fff"></div>
<div style="position:absolute;left:26px;top:543px;width:42px;height:40px;background:#fff"></div>
<div class="cell" style="left:26px;top:543px;width:42px;height:40px;font-size:24.5px;padding-top:2px;">6</div>
<div style="position:absolute;left:69px;top:543px;width:101px;height:40px;background:#fff"></div>
<div class="cell" style="left:69px;top:543px;width:101px;height:40px;font-weight:normal;-webkit-text-stroke:0.6px #000;">甘夫人</div>
<div style="position:absolute;left:171px;top:543px;width:82px;height:40px;background:#fff"></div>
<div class="cell" style="left:171px;top:543px;width:82px;height:40px;font-size:24.5px;padding-top:2px;">40</div>
<div style="position:absolute;left:254px;top:543px;width:84px;height:40px;background:#fff"></div>
<div class="cell" style="left:254px;top:543px;width:84px;height:40px;font-weight:normal;-webkit-text-stroke:0.6px #000;">女</div>
<div style="position:absolute;left:339px;top:543px;width:96px;height:40px;background:#fff"></div>
<div class="cell" style="left:339px;top:543px;width:96px;height:40px;font-weight:normal;-webkit-text-stroke:0.6px #000;">已婚</div>
<div style="position:absolute;left:436px;top:543px;width:95px;height:40px;background:#fff"></div>
<div class="cell" style="left:436px;top:543px;width:95px;height:40px;font-weight:normal;-webkit-text-stroke:0.6px #000;">大本</div>
<div style="position:absolute;left:532px;top:543px;width:189px;height:40px;background:#fff"></div>
<div class="cell" style="left:532px;top:543px;width:189px;height:40px;font-size:24.5px;padding-top:2px;">¥4,478.00</div>
<div style="position:absolute;left:722px;top:543px;width:284px;height:40px;background:#fff"></div>
<div style="position:absolute;left:26px;top:584px;width:42px;height:40px;background:#fff"></div>
<div class="cell" style="left:26px;top:584px;width:42px;height:40px;font-size:24.5px;padding-top:2px;">7</div>
<div style="position:absolute;left:69px;top:584px;width:101px;height:40px;background:#fff"></div>
<div class="cell" style="left:69px;top:584px;width:101px;height:40px;font-weight:normal;-webkit-text-stroke:0.6px #000;">孙尚香</div>
<div style="position:absolute;left:171px;top:584px;width:82px;height:40px;background:#fff"></div>
<div class="cell" style="left:171px;top:584px;width:82px;height:40px;font-size:24.5px;padding-top:2px;">20</div>
<div style="position:absolute;left:254px;top:584px;width:84px;height:40px;background:#fff"></div>
<div class="cell" style="left:254px;top:584px;width:84px;height:40px;font-weight:normal;-webkit-text-stroke:0.6px #000;">女</div>
<div style="position:absolute;left:339px;top:584px;width:96px;height:40px;background:#fff"></div>
<div class="cell" style="left:339px;top:584px;width:96px;height:40px;font-weight:normal;-webkit-text-stroke:0.6px #000;">未婚</div>
<div style="position:absolute;left:436px;top:584px;width:95px;height:40px;background:#fff"></div>
<div class="cell" style="left:436px;top:584px;width:95px;height:40px;font-weight:normal;-webkit-text-stroke:0.6px #000;">中专</div>
<div style="position:absolute;left:532px;top:584px;width:189px;height:40px;background:#fff"></div>
<div class="cell" style="left:532px;top:584px;width:189px;height:40px;font-size:24.5px;padding-top:2px;">¥3,978.00</div>
<div style="position:absolute;left:722px;top:584px;width:284px;height:40px;background:#fff"></div>
<div style="position:absolute;left:26px;top:625px;width:42px;height:40px;background:#fff"></div>
<div class="cell" style="left:26px;top:625px;width:42px;height:40px;font-size:24.5px;padding-top:2px;">8</div>
<div style="position:absolute;left:69px;top:625px;width:101px;height:40px;background:#fff"></div>
<div class="cell" style="left:69px;top:625px;width:101px;height:40px;font-weight:normal;-webkit-text-stroke:0.6px #000;">袁绍</div>
<div style="position:absolute;left:171px;top:625px;width:82px;height:40px;background:#fff"></div>
<div class="cell" style="left:171px;top:625px;width:82px;height:40px;font-size:24.5px;padding-top:2px;">30</div>
<div style="position:absolute;left:254px;top:625px;width:84px;height:40px;background:#fff"></div>
<div class="cell" style="left:254px;top:625px;width:84px;height:40px;font-weight:normal;-webkit-text-stroke:0.6px #000;">男</div>
<div style="position:absolute;left:339px;top:625px;width:96px;height:40px;background:#fff"></div>
<div class="cell" style="left:339px;top:625px;width:96px;height:40px;font-weight:normal;-webkit-text-stroke:0.6px #000;">已婚</div>
<div style="position:absolute;left:436px;top:625px;width:95px;height:40px;background:#fff"></div>
<div class="cell" style="left:436px;top:625px;width:95px;height:40px;font-weight:normal;-webkit-text-stroke:0.6px #000;">高中</div>
<div style="position:absolute;left:532px;top:625px;width:189px;height:40px;background:#fff"></div>
<div class="cell" style="left:532px;top:625px;width:189px;height:40px;font-size:24.5px;padding-top:2px;">¥2,760.00</div>
<div style="position:absolute;left:722px;top:625px;width:284px;height:40px;background:#fff"></div>
<div style="position:absolute;left:26px;top:666px;width:42px;height:40px;background:#fff"></div>
<div class="cell" style="left:26px;top:666px;width:42px;height:40px;font-size:24.5px;padding-top:2px;">9</div>
<div style="position:absolute;left:69px;top:666px;width:101px;height:40px;background:#fff"></div>
<div class="cell" style="left:69px;top:666px;width:101px;height:40px;font-weight:normal;-webkit-text-stroke:0.6px #000;">徐庶</div>
<div style="position:absolute;left:171px;top:666px;width:82px;height:40px;background:#fff"></div>
<div class="cell" style="left:171px;top:666px;width:82px;height:40px;font-size:24.5px;padding-top:2px;">30</div>
<div style="position:absolute;left:254px;top:666px;width:84px;height:40px;background:#fff"></div>
<div class="cell" style="left:254px;top:666px;width:84px;height:40px;font-weight:normal;-webkit-text-stroke:0.6px #000;">男</div>
<div style="position:absolute;left:339px;top:666px;width:96px;height:40px;background:#fff"></div>
<div class="cell" style="left:339px;top:666px;width:96px;height:40px;font-weight:normal;-webkit-text-stroke:0.6px #000;">已婚</div>
<div style="position:absolute;left:436px;top:666px;width:95px;height:40px;background:#fff"></div>
<div class="cell" style="left:436px;top:666px;width:95px;height:40px;font-weight:normal;-webkit-text-stroke:0.6px #000;">大专</div>
<div style="position:absolute;left:532px;top:666px;width:189px;height:40px;background:#fff"></div>
<div class="cell" style="left:532px;top:666px;width:189px;height:40px;font-size:24.5px;padding-top:2px;">¥3,762.00</div>
<div style="position:absolute;left:722px;top:666px;width:284px;height:40px;background:#fff"></div>
<div style="position:absolute;left:26px;top:707px;width:42px;height:40px;background:#fff"></div>
<div class="cell" style="left:26px;top:707px;width:42px;height:40px;font-size:24.5px;padding-top:2px;">10</div>
<div style="position:absolute;left:69px;top:707px;width:101px;height:40px;background:#fff"></div>
<div class="cell" style="left:69px;top:707px;width:101px;height:40px;font-weight:normal;-webkit-text-stroke:0.6px #000;">赵云</div>
<div style="position:absolute;left:171px;top:707px;width:82px;height:40px;background:#fff"></div>
<div class="cell" style="left:171px;top:707px;width:82px;height:40px;font-size:24.5px;padding-top:2px;">30</div>
<div style="position:absolute;left:254px;top:707px;width:84px;height:40px;background:#fff"></div>
<div class="cell" style="left:254px;top:707px;width:84px;height:40px;font-weight:normal;-webkit-text-stroke:0.6px #000;">男</div>
<div style="position:absolute;left:339px;top:707px;width:96px;height:40px;background:#fff"></div>
<div class="cell" style="left:339px;top:707px;width:96px;height:40px;font-weight:normal;-webkit-text-stroke:0.6px #000;">未婚</div>
<div style="position:absolute;left:436px;top:707px;width:95px;height:40px;background:#fff"></div>
<div class="cell" style="left:436px;top:707px;width:95px;height:40px;font-weight:normal;-webkit-text-stroke:0.6px #000;">大专</div>
<div style="position:absolute;left:532px;top:707px;width:189px;height:40px;background:#fff"></div>
<div class="cell" style="left:532px;top:707px;width:189px;height:40px;font-size:24.5px;padding-top:2px;">¥4,425.00</div>
<div style="position:absolute;left:722px;top:707px;width:284px;height:40px;background:#fff"></div>
<div style="position:absolute;left:26px;top:748px;width:42px;height:40px;background:#fff"></div>
<div class="cell" style="left:26px;top:748px;width:42px;height:40px;font-size:24.5px;padding-top:2px;">11</div>
<div style="position:absolute;left:69px;top:748px;width:101px;height:40px;background:#fff"></div>
<div class="cell" style="left:69px;top:748px;width:101px;height:40px;font-weight:normal;-webkit-text-stroke:0.6px #000;">小乔</div>
<div style="position:absolute;left:171px;top:748px;width:82px;height:40px;background:#fff"></div>
<div class="cell" style="left:171px;top:748px;width:82px;height:40px;font-size:24.5px;padding-top:2px;">30</div>
<div style="position:absolute;left:254px;top:748px;width:84px;height:40px;background:#fff"></div>
<div class="cell" style="left:254px;top:748px;width:84px;height:40px;font-weight:normal;-webkit-text-stroke:0.6px #000;">女</div>
<div style="position:absolute;left:339px;top:748px;width:96px;height:40px;background:#fff"></div>
<div class="cell" style="left:339px;top:748px;width:96px;height:40px;font-weight:normal;-webkit-text-stroke:0.6px #000;">已婚</div>
<div style="position:absolute;left:436px;top:748px;width:95px;height:40px;background:#fff"></div>
<div class="cell" style="left:436px;top:748px;width:95px;height:40px;font-weight:normal;-webkit-text-stroke:0.6px #000;">大专</div>
<div style="position:absolute;left:532px;top:748px;width:189px;height:40px;background:#fff"></div>
<div class="cell" style="left:532px;top:748px;width:189px;height:40px;font-size:24.5px;padding-top:2px;">¥4,722.00</div>
<div style="position:absolute;left:722px;top:748px;width:284px;height:40px;background:#fff"></div>
<div style="position:absolute;left:26px;top:789px;width:42px;height:40px;background:#fff"></div>
<div class="cell" style="left:26px;top:789px;width:42px;height:40px;font-size:24.5px;padding-top:2px;">12</div>
<div style="position:absolute;left:69px;top:789px;width:101px;height:40px;background:#fff"></div>
<div class="cell" style="left:69px;top:789px;width:101px;height:40px;font-weight:normal;-webkit-text-stroke:0.6px #000;">黄盖</div>
<div style="position:absolute;left:171px;top:789px;width:82px;height:40px;background:#fff"></div>
<div class="cell" style="left:171px;top:789px;width:82px;height:40px;font-size:24.5px;padding-top:2px;">40</div>
<div style="position:absolute;left:254px;top:789px;width:84px;height:40px;background:#fff"></div>
<div class="cell" style="left:254px;top:789px;width:84px;height:40px;font-weight:normal;-webkit-text-stroke:0.6px #000;">男</div>
<div style="position:absolute;left:339px;top:789px;width:96px;height:40px;background:#fff"></div>
<div class="cell" style="left:339px;top:789px;width:96px;height:40px;font-weight:normal;-webkit-text-stroke:0.6px #000;">已婚</div>
<div style="position:absolute;left:436px;top:789px;width:95px;height:40px;background:#fff"></div>
<div class="cell" style="left:436px;top:789px;width:95px;height:40px;font-weight:normal;-webkit-text-stroke:0.6px #000;">小学</div>
<div style="position:absolute;left:532px;top:789px;width:189px;height:40px;background:#fff"></div>
<div class="cell" style="left:532px;top:789px;width:189px;height:40px;font-size:24.5px;padding-top:2px;">¥796.00</div>
<div style="position:absolute;left:722px;top:789px;width:284px;height:40px;background:#fff"></div>
<div style="position:absolute;left:26px;top:830px;width:42px;height:40px;background:#fff"></div>
<div class="cell" style="left:26px;top:830px;width:42px;height:40px;font-size:24.5px;padding-top:2px;">13</div>
<div style="position:absolute;left:69px;top:830px;width:101px;height:40px;background:#fff"></div>
<div class="cell" style="left:69px;top:830px;width:101px;height:40px;font-weight:normal;-webkit-text-stroke:0.6px #000;">糜夫人</div>
<div style="position:absolute;left:171px;top:830px;width:82px;height:40px;background:#fff"></div>
<div class="cell" style="left:171px;top:830px;width:82px;height:40px;font-size:24.5px;padding-top:2px;">40</div>
<div style="position:absolute;left:254px;top:830px;width:84px;height:40px;background:#fff"></div>
<div class="cell" style="left:254px;top:830px;width:84px;height:40px;font-weight:normal;-webkit-text-stroke:0.6px #000;">女</div>
<div style="position:absolute;left:339px;top:830px;width:96px;height:40px;background:#fff"></div>
<div class="cell" style="left:339px;top:830px;width:96px;height:40px;font-weight:normal;-webkit-text-stroke:0.6px #000;">已婚</div>
<div style="position:absolute;left:436px;top:830px;width:95px;height:40px;background:#fff"></div>
<div class="cell" style="left:436px;top:830px;width:95px;height:40px;font-weight:normal;-webkit-text-stroke:0.6px #000;">初中</div>
<div style="position:absolute;left:532px;top:830px;width:189px;height:40px;background:#fff"></div>
<div class="cell" style="left:532px;top:830px;width:189px;height:40px;font-size:24.5px;padding-top:2px;">¥3,679.00</div>
<div style="position:absolute;left:722px;top:830px;width:284px;height:40px;background:#fff"></div>
<div style="position:absolute;left:26px;top:871px;width:42px;height:40px;background:#fff"></div>
<div class="cell" style="left:26px;top:871px;width:42px;height:40px;font-size:24.5px;padding-top:2px;">14</div>
<div style="position:absolute;left:69px;top:871px;width:101px;height:40px;background:#fff"></div>
<div class="cell" style="left:69px;top:871px;width:101px;height:40px;font-weight:normal;-webkit-text-stroke:0.6px #000;">张飞</div>
<div style="position:absolute;left:171px;top:871px;width:82px;height:40px;background:#fff"></div>
<div class="cell" style="left:171px;top:871px;width:82px;height:40px;font-size:24.5px;padding-top:2px;">20</div>
<div style="position:absolute;left:254px;top:871px;width:84px;height:40px;background:#fff"></div>
<div class="cell" style="left:254px;top:871px;width:84px;height:40px;font-weight:normal;-webkit-text-stroke:0.6px #000;">男</div>
<div style="position:absolute;left:339px;top:871px;width:96px;height:40px;background:#fff"></div>
<div class="cell" style="left:339px;top:871px;width:96px;height:40px;font-weight:normal;-webkit-text-stroke:0.6px #000;">未婚</div>
<div style="position:absolute;left:436px;top:871px;width:95px;height:40px;background:#fff"></div>
<div class="cell" style="left:436px;top:871px;width:95px;height:40px;font-weight:normal;-webkit-text-stroke:0.6px #000;">大本</div>
<div style="position:absolute;left:532px;top:871px;width:189px;height:40px;background:#fff"></div>
<div class="cell" style="left:532px;top:871px;width:189px;height:40px;font-size:24.5px;padding-top:2px;">¥1,429.00</div>
<div style="position:absolute;left:722px;top:871px;width:284px;height:40px;background:#fff"></div>
<div style="position:absolute;left:26px;top:912px;width:42px;height:40px;background:#fff"></div>
<div class="cell" style="left:26px;top:912px;width:42px;height:40px;font-size:24.5px;padding-top:2px;">15</div>
<div style="position:absolute;left:69px;top:912px;width:101px;height:40px;background:#fff"></div>
<div class="cell" style="left:69px;top:912px;width:101px;height:40px;font-weight:normal;-webkit-text-stroke:0.6px #000;">甘宁</div>
<div style="position:absolute;left:171px;top:912px;width:82px;height:40px;background:#fff"></div>
<div class="cell" style="left:171px;top:912px;width:82px;height:40px;font-size:24.5px;padding-top:2px;">50</div>
<div style="position:absolute;left:254px;top:912px;width:84px;height:40px;background:#fff"></div>
<div class="cell" style="left:254px;top:912px;width:84px;height:40px;font-weight:normal;-webkit-text-stroke:0.6px #000;">男</div>
<div style="position:absolute;left:339px;top:912px;width:96px;height:40px;background:#fff"></div>
<div class="cell" style="left:339px;top:912px;width:96px;height:40px;font-weight:normal;-webkit-text-stroke:0.6px #000;">已婚</div>
<div style="position:absolute;left:436px;top:912px;width:95px;height:40px;background:#fff"></div>
<div class="cell" style="left:436px;top:912px;width:95px;height:40px;font-weight:normal;-webkit-text-stroke:0.6px #000;">初中</div>
<div style="position:absolute;left:532px;top:912px;width:189px;height:40px;background:#fff"></div>
<div class="cell" style="left:532px;top:912px;width:189px;height:40px;font-size:24.5px;padding-top:2px;">¥1,933.00</div>
<div style="position:absolute;left:722px;top:912px;width:284px;height:40px;background:#fff"></div>
<div style="position:absolute;left:26px;top:296px;width:981px;height:1px;background:#000"></div>
<div style="position:absolute;left:26px;top:337px;width:981px;height:1px;background:#000"></div>
<div style="position:absolute;left:26px;top:378px;width:981px;height:1px;background:#000"></div>
<div style="position:absolute;left:26px;top:419px;width:981px;height:1px;background:#000"></div>
<div style="position:absolute;left:26px;top:460px;width:981px;height:1px;background:#000"></div>
<div style="position:absolute;left:26px;top:501px;width:981px;height:1px;background:#000"></div>
<div style="position:absolute;left:26px;top:542px;width:981px;height:1px;background:#000"></div>
<div style="position:absolute;left:26px;top:583px;width:981px;height:1px;background:#000"></div>
<div style="position:absolute;left:26px;top:624px;width:981px;height:1px;background:#000"></div>
<div style="position:absolute;left:26px;top:665px;width:981px;height:1px;background:#000"></div>
<div style="position:absolute;left:26px;top:706px;width:981px;height:1px;background:#000"></div>
<div style="position:absolute;left:26px;top:747px;width:981px;height:1px;background:#000"></div>
<div style="position:absolute;left:26px;top:788px;width:981px;height:1px;background:#000"></div>
<div style="position:absolute;left:26px;top:829px;width:981px;height:1px;background:#000"></div>
<div style="position:absolute;left:26px;top:870px;width:981px;height:1px;background:#000"></div>
<div style="position:absolute;left:26px;top:911px;width:981px;height:1px;background:#000"></div>
<div style="position:absolute;left:26px;top:952px;width:981px;height:1px;background:#000"></div>
<div style="position:absolute;left:68px;top:296px;width:1px;height:700px;background:#000"></div>
<div style="position:absolute;left:170px;top:296px;width:1px;height:700px;background:#000"></div>
<div style="position:absolute;left:253px;top:296px;width:1px;height:700px;background:#000"></div>
<div style="position:absolute;left:338px;top:296px;width:1px;height:700px;background:#000"></div>
<div style="position:absolute;left:435px;top:296px;width:1px;height:700px;background:#000"></div>
<div style="position:absolute;left:531px;top:296px;width:1px;height:700px;background:#000"></div>
<div style="position:absolute;left:721px;top:296px;width:1px;height:700px;background:#000"></div>
<div style="position:absolute;left:1006px;top:296px;width:1px;height:640px;background:#000"></div>
<div style="position:absolute;left:25px;top:296px;width:1px;height:0px;"></div>
<svg width="20" height="25" style="position:absolute;left:1125px;top:874px"><path d="M3.5 3.5V19.5L7.5 15.8L10.3 21.5L12.8 20.3L10.2 14.8H15z" fill="#fff" stroke="#1a1a1a" stroke-width="1.1" stroke-linejoin="miter"/></svg>
</body></html>
